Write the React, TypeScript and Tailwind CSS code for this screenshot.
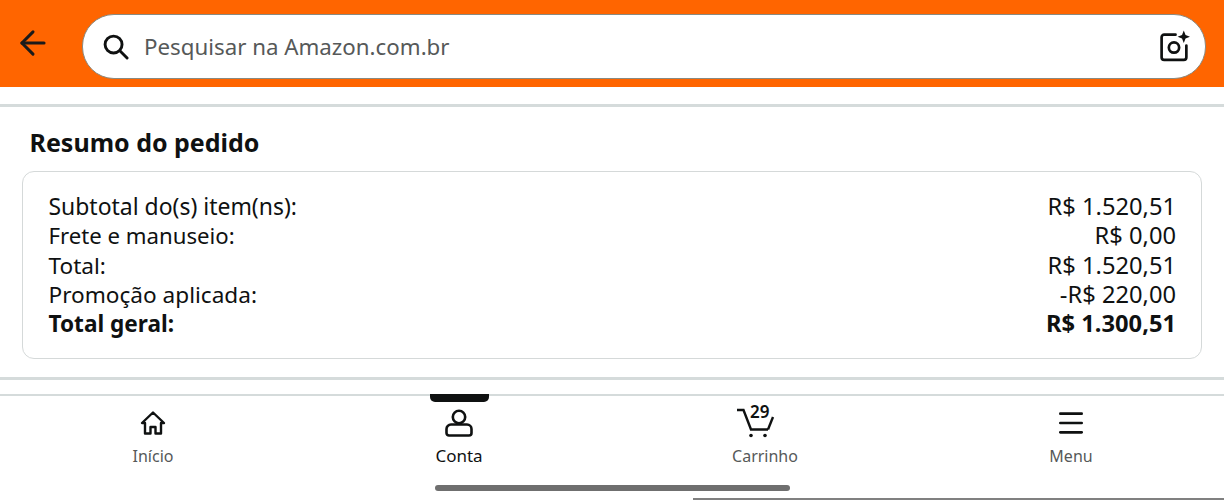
import { ArrowLeft, Menu } from "lucide-react";

const rows = [
  { label: "Subtotal do(s) item(ns):", value: "R$ 1.520,51", labelSize: "text-[22.950px]" },
  { label: "Frete e manuseio:", value: "R$ 0,00", labelSize: "text-[22.200px]" },
  { label: "Total:", value: "R$ 1.520,51", labelSize: "text-[22.600px]" },
  { label: "Promoção aplicada:", value: "-R$ 220,00", labelSize: "text-[22.600px]" },
  { label: "Total geral:", value: "R$ 1.300,51", labelSize: "text-[22.600px]", bold: true },
];

function SearchIcon() {
  return (
    <svg width="27" height="27" viewBox="0 0 28 28" fill="none" stroke="#0f1111" strokeWidth="3" className="shrink-0">
      <circle cx="12" cy="12" r="8.800" />
      <path d="M18.500 18.500l7.500 7.500" strokeLinecap="round" />
    </svg>
  );
}

function CameraSpark() {
  return (
    <svg width="33" height="33" viewBox="0 0 32 32" fill="none" stroke="#0f1111" strokeWidth="2.600" className="shrink-0">
      <path d="M17 4.500H6a2.500 2.500 0 0 0-2.500 2.500v19.500a2.500 2.500 0 0 0 2.500 2.500h19a2.500 2.500 0 0 0 2.500-2.500V15" strokeLinecap="round" />
      <circle cx="15.500" cy="17" r="5" />
      <path d="M25 0.500l1.700 4.300 4.300 1.700-4.300 1.700-1.700 4.300-1.700-4.300-4.300-1.700 4.300-1.700z" fill="#0f1111" stroke="none" />
    </svg>
  );
}

function HomeIcon() {
  return (
    <svg width="26" height="26" viewBox="0 0 26 26" fill="none" stroke="#0f1111" strokeWidth="2.400" strokeLinejoin="round">
      <path d="M13 2.500L2 13l3 0v10.500h5.500V17h5v6.500H21V13l3 0z" />
    </svg>
  );
}

function PersonIcon() {
  return (
    <svg width="28" height="28" viewBox="0 0 28 28" fill="none" stroke="#0f1111" strokeWidth="2.600">
      <circle cx="14" cy="8" r="6.200" />
      <path d="M6 15.500h16a4.500 4.500 0 0 1 4.500 4.500v4a2.500 2.500 0 0 1-2.500 2.500H4a2.500 2.500 0 0 1-2.500-2.500v-4A4.500 4.500 0 0 1 6 15.500z" fill="#ffffff" />
    </svg>
  );
}

function CartIcon() {
  return (
    <div className="relative w-[38px] h-[32px] mr-[18px]">
      <svg width="38" height="32" viewBox="0 0 38 32" fill="none" stroke="#0f1111" strokeWidth="2.400">
        <path d="M0 3h6.500L14 22.500h17" strokeLinejoin="miter" />
        <path d="M36 10L31 22.500" />
        <circle cx="14" cy="28.500" r="1.800" fill="#0f1111" stroke="none" />
        <circle cx="28" cy="28.500" r="1.800" fill="#0f1111" stroke="none" />
      </svg>
      <span className="absolute left-[13px] top-[-5px] text-[17px] leading-[20px] font-semibold text-[#0f1111]">29</span>
    </div>
  );
}

export default function App() {
  return (
    <div className="relative w-[1224px] h-[500px] overflow-hidden bg-white font-['Noto_Sans',sans-serif] text-[#0f1111]">
      {/* Search header */}
      <header className="h-[87px] bg-[#ff6500] flex items-center pl-[15px] pr-[18px] pt-[6px]">
        <ArrowLeft className="w-[38px] h-[38px] mb-[8px] ml-[-1px] shrink-0 text-[#1a1a1a]" strokeWidth={1.900} />
        <div className="ml-[30px] flex-1 h-[65px] bg-white rounded-[32px] border-[1.500px] border-[#8a8a80] flex items-center pl-[19px] pr-[14px]">
          <SearchIcon />
          <span className="ml-[15px] flex-1 text-[22.300px] text-[#565959]">Pesquisar na Amazon.com.br</span>
          <CameraSpark />
        </div>
      </header>

      <div className="h-[17px]" />
      <div className="h-[3px] bg-[#d5dbdb]" />

      {/* Order summary */}
      <section className="px-[22px]">
        <h2 className="mt-[19px] ml-[7.500px] text-[25px] leading-[32px] font-bold">Resumo do pedido</h2>
        <div className="mt-[13px] w-[1180px] h-[188px] border-[1.500px] border-[#d5d9d9] rounded-[12px] pl-[25.500px] pr-[25px] pt-[20px]">
          {rows.map((row) => (
            <div
              key={row.label}
              className={`flex justify-between leading-[29.300px] ${row.bold ? "font-bold" : ""}`}
            >
              <span className={row.labelSize}>{row.label}</span>
              <span className="text-[23.700px]">{row.value}</span>
            </div>
          ))}
        </div>
      </section>

      <div className="mt-[18px] h-[3px] bg-[#d5dbdb]" />
      <div className="mt-[14px] h-[2px] bg-[#d5dbdb]" />

      {/* Bottom nav */}
      <nav className="grid grid-cols-4 h-[104px]">
        <div className="flex flex-col items-center pt-[11px]">
          <div className="h-[32px] flex items-center"><HomeIcon /></div>
          <span className="mt-[5px] text-[16px] leading-[24px] text-[#565959]">Início</span>
        </div>
        <div className="relative flex flex-col items-center pt-[11px]">
          <div className="absolute top-[-2px] w-[59px] h-[8px] bg-[#0f1111] rounded-b-[5px]" />
          <div className="h-[32px] flex items-center"><PersonIcon /></div>
          <span className="mt-[5px] text-[17px] leading-[24px]">Conta</span>
        </div>
        <div className="flex flex-col items-center pt-[11px]">
          <CartIcon />
          <span className="mt-[5px] text-[16px] leading-[24px] text-[#565959]">Carrinho</span>
        </div>
        <div className="flex flex-col items-center pt-[11px]">
          <div className="h-[32px] flex items-center"><Menu className="w-[32px] h-[32px]" strokeWidth={2} /></div>
          <span className="mt-[5px] text-[16px] leading-[24px] text-[#565959]">Menu</span>
        </div>
      </nav>

      {/* Gesture pill and stray edge line */}
      <div className="absolute left-[435px] top-[485px] w-[355px] h-[6px] rounded-full bg-[#6f6f6f]" />
      <div className="absolute left-[693px] right-0 top-[498px] h-[2px] bg-[#808080]" />
    </div>
  );
}
